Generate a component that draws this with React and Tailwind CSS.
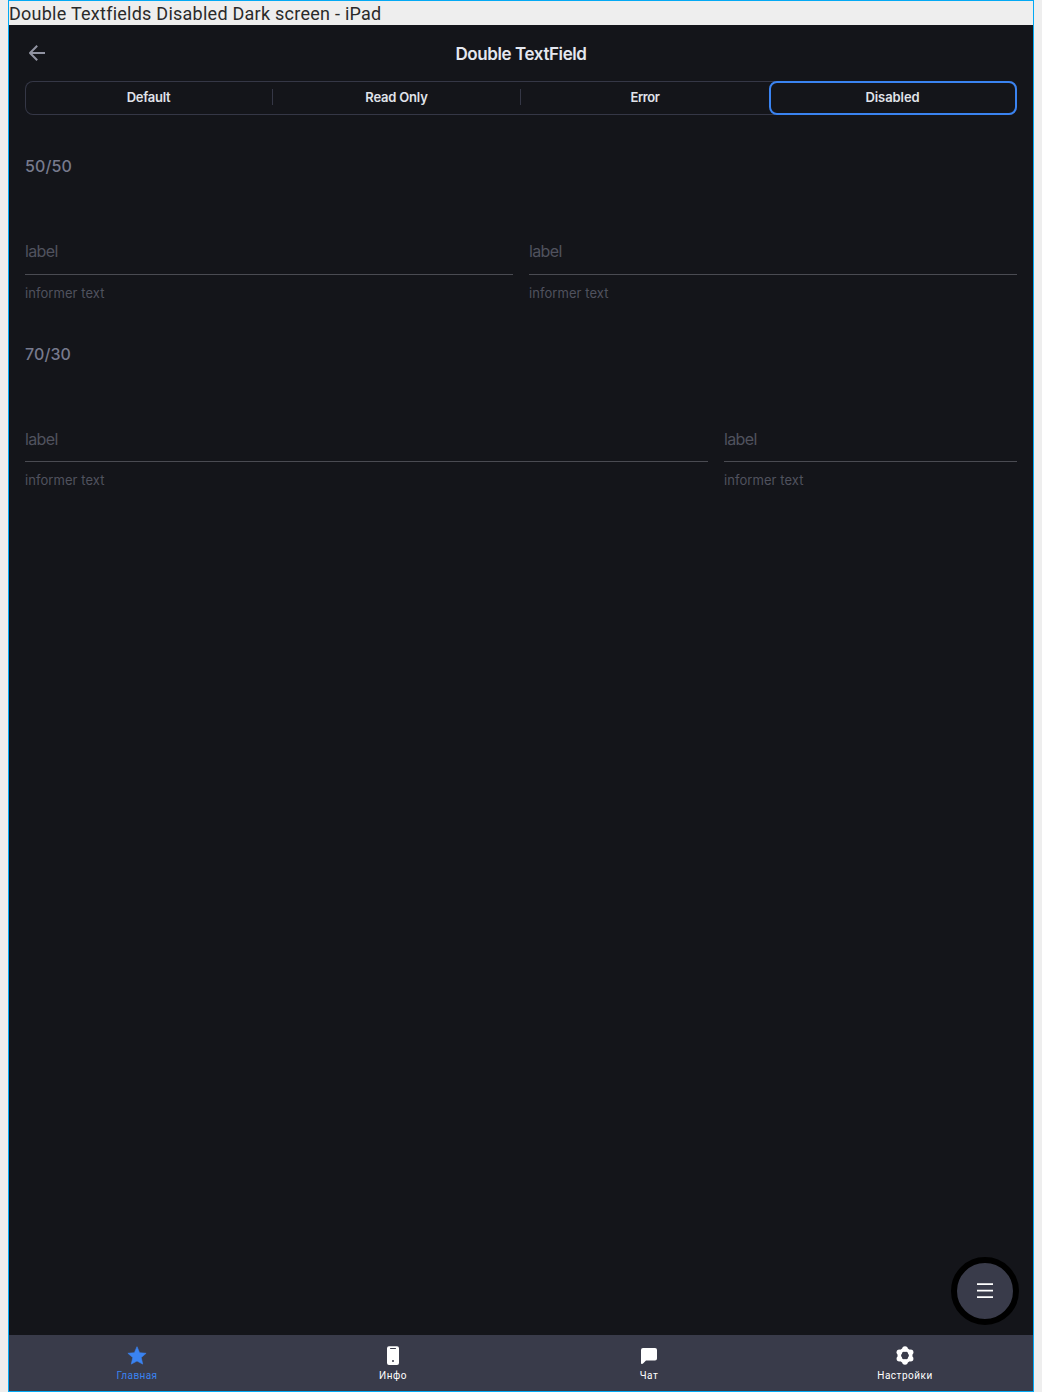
const tabs = [
  { label: "Default", spacing: "tracking-[-0.25px]" },
  { label: "Read Only", spacing: "tracking-[-0.2px]" },
  { label: "Error", spacing: "tracking-[-0.4px]" },
];

const gearLobes = [
  [12, 5.5],
  [17.63, 8.75],
  [17.63, 15.25],
  [12, 18.5],
  [6.37, 15.25],
  [6.37, 8.75],
];

function Field({ className, gap }) {
  return (
    <div className={className}>
      <div className="h-6 text-[16px] leading-6 tracking-[-0.65px] text-[#50525e]">label</div>
      <div className={`${gap} border-b border-[#4a4b52]`} />
      <div className="mt-2 h-5 text-[13px] leading-5 tracking-[0.07px] text-[#50525e]">informer text</div>
    </div>
  );
}

function NavItem({ label, color, children }) {
  return (
    <div className={`flex flex-1 flex-col items-center pt-2 ${color}`}>
      <svg width="24" height="24" viewBox="0 -0.5 24 24" fill="currentColor">{children}</svg>
      <span className="mt-0.5 font-[Roboto,sans-serif] text-[10px] leading-[14px] tracking-[0.5px]">{label}</span>
    </div>
  );
}

export default function App() {
  return (
    <div className="h-[1392px] w-[1042px] overflow-hidden bg-[#eeeeee] pl-2 font-[Inter,sans-serif]">
      <div className="flex h-full w-[1026px] flex-col border border-[#03a9f4]">
        <div className="h-6 font-[Roboto,sans-serif] text-[18px] leading-[26px] tracking-[0.25px] whitespace-nowrap text-[#2a2a2a]">
          Double Textfields Disabled Dark screen - iPad
        </div>
        <div className="flex flex-1 flex-col bg-[#14151a]">
          <div className="flex h-14 items-center px-4">
            <svg width="24" height="24" viewBox="0 0 24 24" fill="none" stroke="#9193a2" strokeWidth="2">
              <path d="M20 12H5.5" />
              <path d="M12.2 4.800L5 12l7.200 7.200" strokeLinejoin="round" />
            </svg>
            <div className="flex-1 pt-0.5 pr-6 text-center text-[17px] leading-6 font-semibold tracking-[-0.4px] text-[#e4e7ef]">Double TextField</div>
          </div>
          <div className="mx-4 flex h-[34px] rounded-lg text-[13px] font-semibold text-[#e0e3ea] ring-1 ring-[#353746] ring-inset">
            {tabs.map(({ label, spacing }, i) => (
              <div key={label} className="flex w-[248px] items-center">
                <div className={`flex-1 pb-px text-center ${spacing}`}>{label}</div>
                {i < 2 && <div className="mb-0.5 h-4 w-px bg-[#353746]" />}
              </div>
            ))}
            <div className="flex w-[248px] items-center justify-center rounded-lg border-2 border-[#3a83f1] bg-[#14151a] pr-px pb-px tracking-[-0.06px]">Disabled</div>
          </div>
          <div className="px-4 pt-[39px]">
            <div className="h-6 text-[16px] leading-6 font-medium tracking-[0.1px] text-[#777a8d]">50/50</div>
            <div className="mt-[61px] flex gap-4">
              <Field className="flex-1" gap="h-3" />
              <Field className="flex-1" gap="h-3" />
            </div>
            <div className="mt-[39px] h-6 text-[16px] leading-6 font-medium tracking-[0.1px] text-[#777a8d]">70/30</div>
            <div className="mt-[61px] flex gap-4">
              <Field className="w-[683px]" gap="h-[11px]" />
              <Field className="flex-1" gap="h-[11px]" />
            </div>
          </div>
          <div className="mt-auto mr-[14px] mb-[10px] flex size-[68px] items-center justify-center self-end rounded-full border-6 border-black bg-[#393b4a]">
            <svg width="16" height="16" viewBox="0 0 16 16" fill="#ffffff">
              <path d="M0 .300h16v1.700H0zM0 6.800h16v1.700H0zM0 13.200h16v1.800H0z" />
            </svg>
          </div>
          <div className="flex h-14 bg-[#393b4a]">
            <NavItem label="Главная" color="text-[#3a83f1] [&>span]:tracking-[0.4px]">
              <path d="M12 3.200l2.600 6 6.500.600-4.900 4.300 1.500 6.500L12 17.500l-5.700 3.100 1.500-6.500-4.900-4.300 6.500-.600z" stroke="currentColor" strokeWidth=".6" strokeLinejoin="round" />
            </NavItem>
            <NavItem label="Инфо" color="text-white">
              <path fillRule="evenodd" d="M8 2.700h8a2 2 0 012 2v14.800a2 2 0 01-2 2H8a2 2 0 01-2-2V4.700a2 2 0 012-2zM9.500 4.400a.5.5 0 000 1h5a.5.5 0 000-1zM12 16.500a1 1 0 100 2 1 1 0 000-2z" />
            </NavItem>
            <NavItem label="Чат" color="text-white">
              <path d="M6 4.500h12a2 2 0 012 2V15a2 2 0 01-2 2H9l-3 3c-.7.700-2 .4-2-.6V6.500a2 2 0 012-2z" />
            </NavItem>
            <NavItem label="Настройки" color="text-white">
              <circle cx="12" cy="12" r="5.7" fill="none" stroke="currentColor" strokeWidth="3.6" />
              {gearLobes.map(([x, y]) => (
                <circle key={`${x}-${y}`} cx={x} cy={y} r="2.8" />
              ))}
            </NavItem>
          </div>
        </div>
      </div>
    </div>
  );
}
